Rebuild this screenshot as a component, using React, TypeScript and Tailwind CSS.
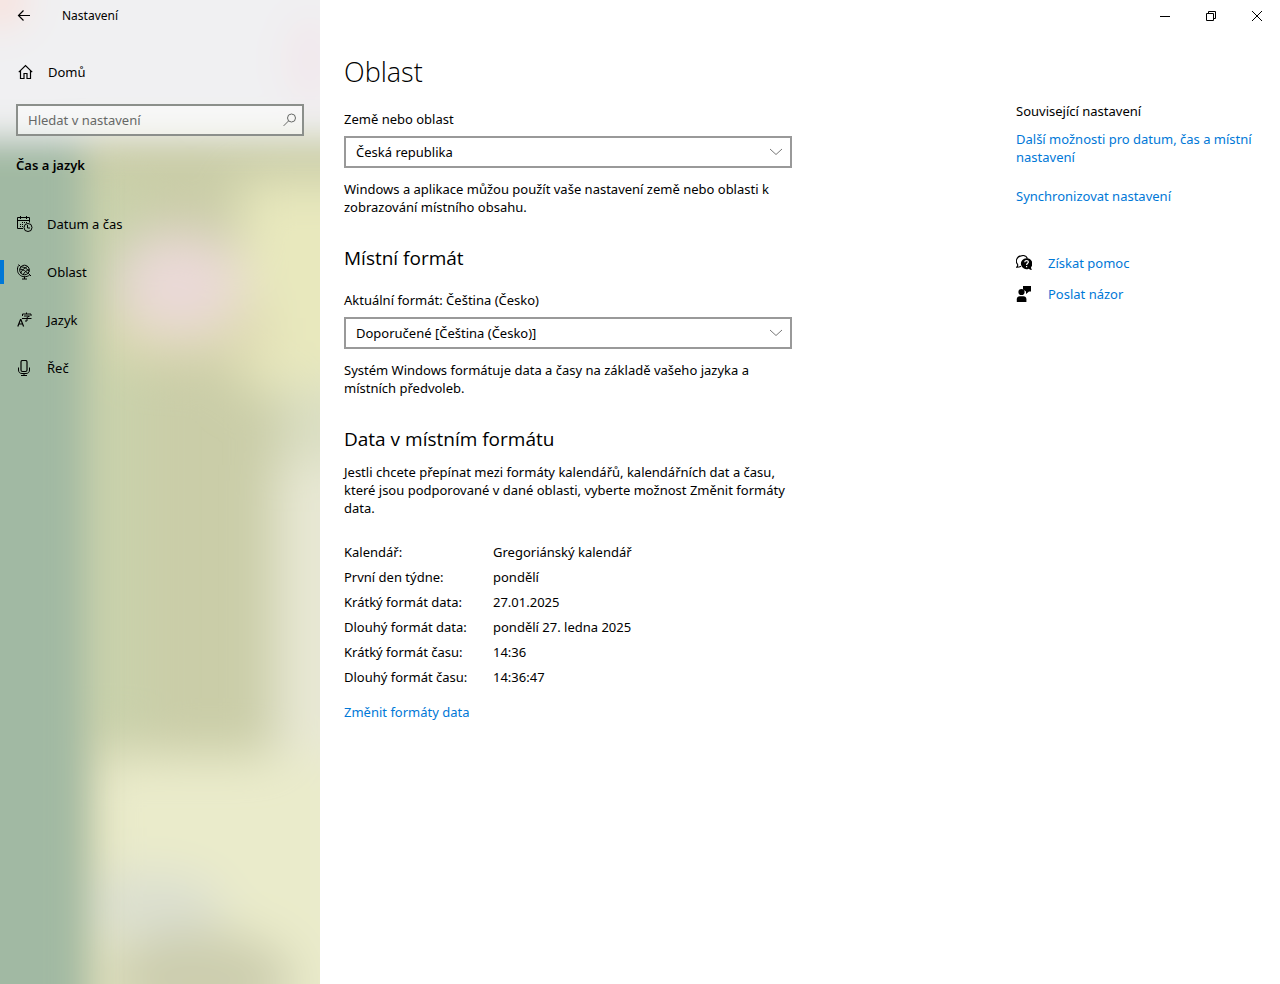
import type { ReactNode } from 'react'

function Icon({ children }: { children: ReactNode }) {
  return (
    <svg className="size-4 shrink-0" viewBox="0 0 16 16" fill="none" stroke="currentColor" strokeWidth="1" aria-hidden="true">
      {children}
    </svg>
  )
}

function BackIcon() {
  return (
    <Icon>
      <path d="M14 7.5H2.5M7.5 2.5l-5 5 5 5" strokeWidth="1.2" />
    </Icon>
  )
}

function HomeIcon() {
  return (
    <Icon>
      <path d="M.8 8.200 7.500 1.500l6.700 6.700M2.500 6.800v7.700h3.500V9.500h3v5h3.500V6.800" strokeWidth="1.200" />
    </Icon>
  )
}

function SearchIcon() {
  return (
    <Icon>
      <circle cx="9.500" cy="6" r="4" />
      <path d="m6.600 8.900-5 5" />
    </Icon>
  )
}

function CalendarIcon() {
  return (
    <Icon>
      <path d="M6 12.500H.5v-11h12v5M.5 4.500h12M3.500 0v3M9.500 0v3" />
      <path d="M5 6.500h1M7 6.500h1M9 6.500h1M3 8.500h1M5 8.500h1M3 10.500h1M5 10.500h1" />
      <circle cx="11" cy="11.500" r="4" />
      <path d="M10.500 9v3h2.500" />
    </Icon>
  )
}

function GlobeIcon() {
  return (
    <Icon>
      <circle cx="7.500" cy="6" r="4.800" />
      <path d="M2.800 5c3 .2 6.500 2.400 8.400 4.800M4 2.700c3.500.3 6.500 2.300 8.300 4.800M10.800 2.400C7.500 3.500 4.500 6.500 3.700 9.300M12.300 5.500c-2.700.8-5 2.700-6.300 5.500" />
      <path d="M1.600 1.500C-.2 4.500 0 8.200 2.500 10.700c2.700 2.600 7 2.700 10.200.3M1.500.5l2 2M11.300 9.300l2.700 2.700M7.500 12.500v2.500M5 15h5" />
    </Icon>
  )
}

function LanguageIcon() {
  return (
    <Icon>
      <path d="m.8 14.500 2.700-7h.4l2.700 7M1.800 12h4" strokeWidth="1.200" />
      <path d="M9.500.5v1.500M5.500 4V2h8.500v2M7 4h5.500l-2.500 1.500v3.500H8M5 6.500h9.500" />
    </Icon>
  )
}

function MicIcon() {
  return (
    <Icon>
      <rect x="4" y=".5" width="6" height="11" rx="1.500" strokeWidth="1.200" />
      <path d="M1.500 7.500v2.500c0 2.200 1.300 3.500 3.500 3.500h4c2.200 0 3.500-1.300 3.500-3.500V7.500M7 13.500v2M4 15.500h6" />
    </Icon>
  )
}

function HelpIcon() {
  return (
    <Icon>
      <path d="M5 11.300c-1 .7-2.500 1-4.400 1C1.600 11.300 2 10.300 1.600 9.400A5.200 5.200 0 0 1 5 .9c3-.9 5.500.3 6.500 2.500" strokeWidth="1.100" />
      <path d="M10.500 3.200a5.500 5.500 0 1 0 2.200 10.500c1 .8 2 1.200 3.200 1.200-.6-.8-.9-1.700-.9-2.600A5.500 5.500 0 0 0 10.500 3.200Z" fill="currentColor" stroke="none" />
      <path d="M8.700 7.300c.1-1.200 1-1.700 1.900-1.700 1 0 1.800.6 1.800 1.500 0 1.200-1.800 1.300-1.800 2.900M10.600 11v1.200" stroke="white" strokeWidth="1.200" />
    </Icon>
  )
}

function FeedbackIcon() {
  return (
    <Icon>
      <g fill="currentColor" stroke="none">
        <path d="M7 0h8v5.500h-2L10 8V5.500L7 3.500Z" />
        <circle cx="5.500" cy="6" r="3.100" />
        <path d="M.8 16v-2.800c0-1.800 1.200-3 3-3h3.600c1.800 0 3 1.200 3 3V16Z" />
      </g>
    </Icon>
  )
}

const navItems = [
  { label: 'Datum a čas', icon: <CalendarIcon />, active: false },
  { label: 'Oblast', icon: <GlobeIcon />, active: true },
  { label: 'Jazyk', icon: <LanguageIcon />, active: false },
  { label: 'Řeč', icon: <MicIcon />, active: false },
]

const formats = [
  ['Kalendář:', 'Gregoriánský kalendář'],
  ['První den týdne:', 'pondělí'],
  ['Krátký formát data:', '27.01.2025'],
  ['Dlouhý formát data:', 'pondělí 27. ledna 2025'],
  ['Krátký formát času:', '14:36'],
  ['Dlouhý formát času:', '14:36:47'],
]

function Dropdown({ id, label, value }: { id: string; label: string; value: string }) {
  return (
    <div>
      <label htmlFor={id} className="block">{label}</label>
      <div className="relative mt-2">
        <select id={id} className="block h-8 w-full appearance-none border-2 border-[#999999] bg-white px-2.5 leading-[18px]">
          <option>{value}</option>
        </select>
        <svg className="pointer-events-none absolute top-2 right-2 size-4 text-[#777777]" viewBox="0 0 16 16" fill="none" stroke="currentColor" aria-hidden="true">
          <path d="m2 5 6 5.500L14 5" />
        </svg>
      </div>
    </div>
  )
}

// blurred wallpaper showing through the acrylic pane
function Wallpaper() {
  return (
    <svg className="pointer-events-none absolute inset-0 -z-10 size-full" viewBox="0 0 320 984" preserveAspectRatio="none" aria-hidden="true">
      <defs>
        <filter id="soft" x="-50%" y="-50%" width="200%" height="200%">
          <feGaussianBlur stdDeviation="24" />
        </filter>
        <filter id="softer" x="-50%" y="-50%" width="200%" height="200%">
          <feGaussianBlur stdDeviation="17" />
        </filter>
      </defs>
      <rect width="320" height="984" fill="#cacda8" />
      <g filter="url(#soft)">
        <rect x="70" y="180" width="75" height="560" fill="#c9d2ab" />
        <rect x="240" y="180" width="180" height="210" fill="#e8e8bd" />
        <rect x="110" y="300" width="160" height="60" fill="#dedab2" />
        <rect x="280" y="385" width="140" height="90" fill="#dadec2" />
        <rect x="275" y="465" width="140" height="290" fill="#e8e8d4" />
        <rect x="90" y="755" width="330" height="330" fill="#eaebcb" />
        <ellipse cx="150" cy="905" rx="75" ry="34" fill="#dbdfd0" />
        <ellipse cx="200" cy="980" rx="95" ry="50" fill="#cccdae" />
        <ellipse cx="180" cy="283" rx="62" ry="52" fill="#ead9d7" />
      </g>
      <g filter="url(#softer)">
        <rect x="-100" y="120" width="184" height="980" fill="#a1b9a3" />
        <rect x="-100" y="-120" width="520" height="258" fill="#f0f0f2" />
        <ellipse cx="0" cy="0" rx="30" ry="30" fill="#f7e3df" />
        <ellipse cx="310" cy="60" rx="25" ry="45" fill="#f2e8ec" />
      </g>
    </svg>
  )
}

function Sidebar() {
  return (
    <aside className="relative isolate w-80 shrink-0 overflow-hidden">
      <Wallpaper />
      <div className="flex h-8 items-center text-xs">
        <button type="button" aria-label="Zpět" className="flex h-8 w-12 items-center justify-center">
          <BackIcon />
        </button>
        <span className="ml-3.5">Nastavení</span>
      </div>
      <a href="#domu" className="mt-6 flex h-8 items-center gap-3.5 pr-4 pl-[18px]">
        <HomeIcon />
        <span>Domů</span>
      </a>
      <div className="mx-4 mt-4 flex h-8 items-center border-2 border-[#8b8f8b] bg-white/50 pr-1 pl-2.5">
        <input type="text" aria-label="Hledat v nastavení" placeholder="Hledat v nastavení" className="min-w-0 flex-1 bg-transparent outline-none placeholder:text-[#666866]" />
        <span className="text-[#666866]">
          <SearchIcon />
        </span>
      </div>
      <h2 className="mt-5 px-4 font-semibold">Čas a jazyk</h2>
      <nav className="mt-[26px]">
        {navItems.map((item) => (
          <a key={item.label} href="#" aria-current={item.active ? 'page' : undefined} className="flex h-12 items-center">
            <span className={item.active ? 'h-6 w-1 bg-[#0078d7]' : 'h-6 w-1'} />
            <span className="mr-3.5 ml-[13px]">{item.icon}</span>
            <span>{item.label}</span>
          </a>
        ))}
      </nav>
    </aside>
  )
}

function WindowControls() {
  return (
    <div className="flex h-8 justify-end">
      <button type="button" aria-label="Minimalizovat" className="flex w-[46px] items-center justify-center">
        <Icon><path d="M3 8.500h10" /></Icon>
      </button>
      <button type="button" aria-label="Obnovit" className="flex w-[46px] items-center justify-center">
        <Icon><path d="M3.500 5.500h7v7h-7zM5.500 5.500v-2h7v7h-2" /></Icon>
      </button>
      <button type="button" aria-label="Zavřít" className="flex w-[46px] items-center justify-center">
        <Icon><path d="m3 3 10 10M13 3 3 13" /></Icon>
      </button>
    </div>
  )
}

export default function App() {
  return (
    <div className="flex min-h-screen bg-white font-['Noto_Sans','Open_Sans',sans-serif] text-[13px] leading-[18px] text-black">
      <Sidebar />
      <div className="min-w-0 flex-1">
        <WindowControls />
        <div className="flex justify-between gap-8 px-6 pt-[22px]">
          <main className="w-full max-w-[448px]">
            <h1 className="mb-5 font-['Open_Sans',sans-serif] text-[27px] leading-9 font-light">Oblast</h1>
            <Dropdown id="country" label="Země nebo oblast" value="Česká republika" />
            <p className="mt-3">Windows a aplikace můžou použít vaše nastavení země nebo oblasti k zobrazování místního obsahu.</p>

            <h2 className="mt-7 mb-[19px] font-['Open_Sans',sans-serif] text-[19px] leading-7">Místní formát</h2>
            <Dropdown id="format" label="Aktuální formát: Čeština (Česko)" value="Doporučené [Čeština (Česko)]" />
            <p className="mt-3">Systém Windows formátuje data a časy na základě vašeho jazyka a místních předvoleb.</p>

            <h2 className="mt-7 mb-[10px] font-['Open_Sans',sans-serif] text-[19px] leading-7">Data v místním formátu</h2>
            <p>Jestli chcete přepínat mezi formáty kalendářů, kalendářních dat a času, které jsou podporované v dané oblasti, vyberte možnost Změnit formáty data.</p>
            <table className="mt-[22px] mb-3.5">
              <tbody>
                {formats.map(([name, value]) => (
                  <tr key={name} className="h-[25px]">
                    <th scope="row" className="w-[149px] text-left font-normal">{name}</th>
                    <td>{value}</td>
                  </tr>
                ))}
              </tbody>
            </table>
            <a href="#formaty" className="text-[#0078d7]">Změnit formáty data</a>
          </main>

          <aside className="mt-12 w-60 shrink-0">
            <h2 className="mb-2.5">Související nastavení</h2>
            <a href="#dalsi" className="block text-[#0078d7]">Další možnosti pro datum, čas a místní nastavení</a>
            <a href="#sync" className="mt-[21px] block text-[#0078d7]">Synchronizovat nastavení</a>
            <div className="mt-[49px] space-y-[13px]">
              <a href="#pomoc" className="flex items-center gap-4">
                <HelpIcon />
                <span className="text-[#0078d7]">Získat pomoc</span>
              </a>
              <a href="#nazor" className="flex items-center gap-4">
                <FeedbackIcon />
                <span className="text-[#0078d7]">Poslat názor</span>
              </a>
            </div>
          </aside>
        </div>
      </div>
    </div>
  )
}
